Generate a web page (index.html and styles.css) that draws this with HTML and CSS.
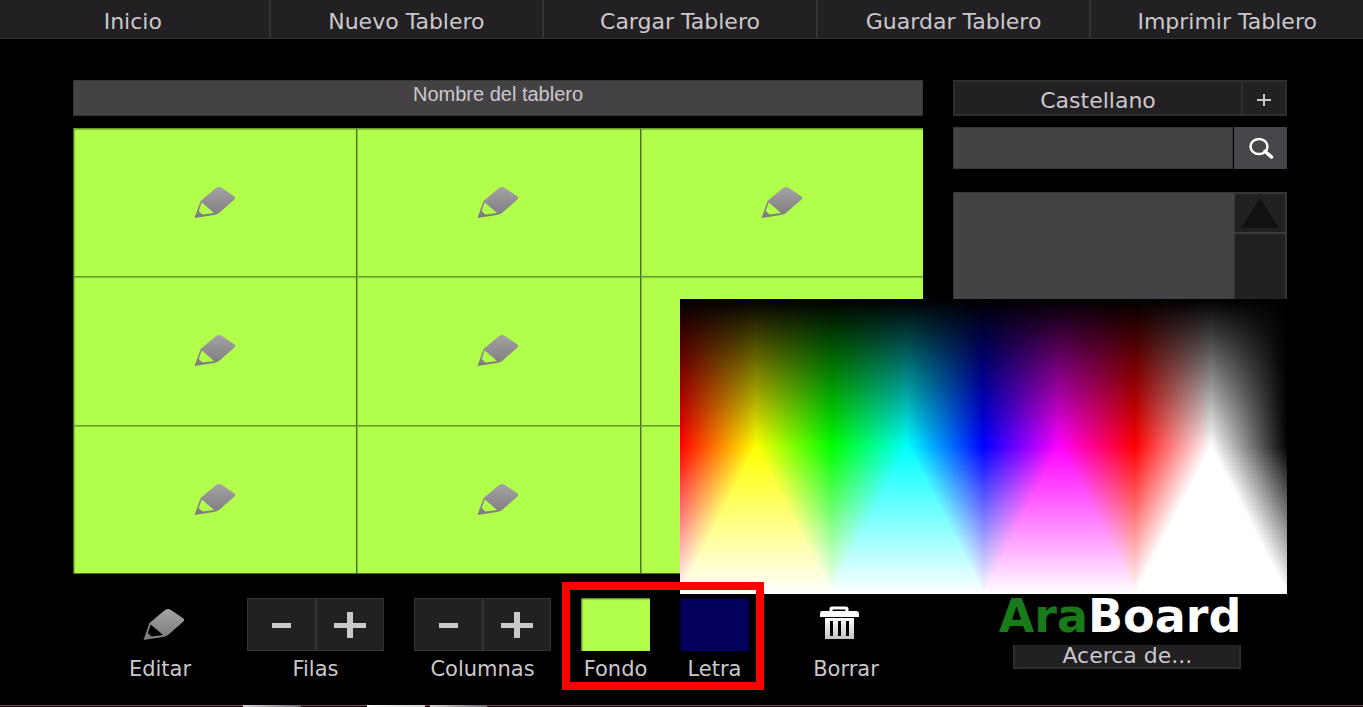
FILE: index.html
```html
<!DOCTYPE html>
<html lang="es">
<head>
    <meta charset="UTF-8">
    <meta name="viewport" content="width=device-width, initial-scale=1.0">
    <title>AraBoard</title>
    <link rel="stylesheet" href="styles.css">
</head>
<body>
    <svg class="defs" aria-hidden="true">
        <defs>
            <linearGradient id="metal" x1="0" y1="0" x2="0" y2="1">
                <stop offset="0" stop-color="#a5a2a5"/>
                <stop offset="1" stop-color="#7d7a7d"/>
            </linearGradient>
            <linearGradient id="silver" x1="0" y1="0" x2="0" y2="1">
                <stop offset="0" stop-color="#ffffff"/>
                <stop offset="1" stop-color="#c4c2c4"/>
            </linearGradient>
            <symbol id="pencil" viewBox="0 0 42 33">
                <path fill="url(#metal)" fill-rule="evenodd" d="M0.5 32 L6.5 15 L22 2 Q25 0 28 2 L40.5 10.5 Q42 12 40.5 13.5 L25 27 Q23 28.5 20 29 Z M7.8 16.5 L4.8 25 L8.5 28.5 L20 27 Z"/>
            </symbol>
            <symbol id="minus" viewBox="0 0 32 26">
                <path fill="#cbc8cc" d="M7 11h19v5H7z"/>
            </symbol>
            <symbol id="plus" viewBox="0 0 32 26">
                <path fill="#cbc8cc" d="M0 11h13V0h6v11h13v5H19v10h-6V16H0z"/>
            </symbol>
        </defs>
    </svg>

    <nav class="menu">
        <a href="#">Inicio</a>
        <a href="#">Nuevo Tablero</a>
        <a href="#">Cargar Tablero</a>
        <a href="#">Guardar Tablero</a>
        <a href="#">Imprimir Tablero</a>
    </nav>

    <main class="workspace">
        <section class="editor">
            <input type="text" class="board-name" value="Nombre del tablero" aria-label="Nombre del tablero">
            <div class="board">
                <button class="cell" aria-label="Casilla 1"><svg class="pencil"><use href="#pencil"/></svg></button>
                <button class="cell" aria-label="Casilla 2"><svg class="pencil"><use href="#pencil"/></svg></button>
                <button class="cell" aria-label="Casilla 3"><svg class="pencil"><use href="#pencil"/></svg></button>
                <button class="cell" aria-label="Casilla 4"><svg class="pencil"><use href="#pencil"/></svg></button>
                <button class="cell" aria-label="Casilla 5"><svg class="pencil"><use href="#pencil"/></svg></button>
                <button class="cell" aria-label="Casilla 6"><svg class="pencil"><use href="#pencil"/></svg></button>
                <button class="cell" aria-label="Casilla 7"><svg class="pencil"><use href="#pencil"/></svg></button>
                <button class="cell" aria-label="Casilla 8"><svg class="pencil"><use href="#pencil"/></svg></button>
                <button class="cell" aria-label="Casilla 9"><svg class="pencil"><use href="#pencil"/></svg></button>
            </div>
        </section>

        <aside class="sidebar">
            <div class="language">
                <select aria-label="Idioma">
                    <option>Castellano</option>
                </select>
                <button aria-label="Más idiomas">
                    <svg width="14" height="12" viewBox="0 0 14 12"><path fill="#cbc8cc" d="M0 5h6V0h2v5h6v2H8v5H6V7H0z"/></svg>
                </button>
            </div>
            <form class="search">
                <input type="text" aria-label="Buscar pictograma">
                <button type="button" aria-label="Buscar">
                    <svg width="26" height="22" viewBox="0 0 26 22">
                        <ellipse cx="11" cy="9.5" rx="8.5" ry="7.5" fill="none" stroke="#fff" stroke-width="2.4"/>
                        <path d="M17 14.5 L23.5 20" stroke="#fff" stroke-width="3.6" stroke-linecap="round"/>
                    </svg>
                </button>
            </form>
            <div class="results">
                <div class="results-list"></div>
                <div class="scroll">
                    <button class="scroll-up" aria-label="Subir">
                        <svg width="38" height="30" viewBox="0 0 38 30"><path fill="#111012" d="M19 0 38 30H0z"/></svg>
                    </button>
                </div>
            </div>
        </aside>

        <div class="toolbar">
            <div class="tool">
                <button class="icon-btn" id="edit" aria-labelledby="edit-label">
                    <svg width="50" height="33" viewBox="0 0 50 33"><use href="#pencil" x="8" width="42" height="33"/></svg>
                </button>
                <label id="edit-label" for="edit">Editar</label>
            </div>
            <div class="tool">
                <div class="stepper">
                    <button aria-label="Quitar fila"><svg><use href="#minus"/></svg></button>
                    <button aria-label="Añadir fila"><svg><use href="#plus"/></svg></button>
                </div>
                <span>Filas</span>
            </div>
            <div class="tool">
                <div class="stepper">
                    <button aria-label="Quitar columna"><svg><use href="#minus"/></svg></button>
                    <button aria-label="Añadir columna"><svg><use href="#plus"/></svg></button>
                </div>
                <span>Columnas</span>
            </div>
            <div class="colors">
                <div class="tool">
                    <input type="color" class="swatch" id="fondo" value="#b2ff4b">
                    <label for="fondo">Fondo</label>
                </div>
                <div class="tool">
                    <input type="color" class="swatch" id="letra" value="#04005b">
                    <label for="letra">Letra</label>
                </div>
            </div>
            <div class="tool">
                <button class="icon-btn" id="clear" aria-labelledby="clear-label">
                    <svg width="52" height="38" viewBox="0 0 52 38">
                        <path fill="none" stroke="#fff" stroke-width="3" d="M11 6V3q0-1 1-1h14q1 0 1 1v3"/>
                        <path fill="#fff" d="M2 5h34q3 0 3 3v3H0V8q0-3 2-3z"/>
                        <path fill="url(#silver)" fill-rule="evenodd" d="M5 12h29v21H5zM10 15v15h3V15zM18 15v15h3V15zM26 15v15h3V15z"/>
                    </svg>
                </button>
                <label id="clear-label" for="clear">Borrar</label>
            </div>
        </div>

        <div class="brand">
            <div class="brand-inner">
                <div class="logo"><span>Ara</span>Board</div>
                <button class="about">Acerca de...</button>
            </div>
        </div>

        <div class="spectrum"></div>
    </main>

    <footer class="taskbar"></footer>
</body>
</html>
```
FILE: styles.css
```css
* {
    margin: 0;
    padding: 0;
    box-sizing: border-box;
}

body {
    font-family: "DejaVu Sans", Verdana, sans-serif;
    font-size: 22px;
    min-height: 100vh;
    display: flex;
    flex-direction: column;
    background: #000;
    color: #cbc8cc;
    overflow: hidden;
}

button,
input,
select {
    font: inherit;
    color: inherit;
    border: none;
    border-radius: 0;
    outline: none;
}

button,
select {
    cursor: pointer;
}

button {
    display: flex;
    align-items: center;
    justify-content: center;
}

.defs {
    position: absolute;
    width: 0;
    height: 0;
}

/* top menu */
.menu {
    display: flex;
    height: 39px;
    margin-left: -3px;
    background: #222023;
    border-bottom: 1px solid #353336;
}

.menu a {
    flex: 1;
    display: flex;
    align-items: center;
    justify-content: center;
    padding-top: 4px;
    color: inherit;
    text-decoration: none;
    border-right: 2px solid #353336;
}

.menu a:last-child {
    border-right: none;
}

/* main area */
.workspace {
    position: relative;
    flex: 1;
    display: grid;
    grid-template-columns: minmax(0, 850fr) minmax(0, 334fr);
    grid-template-rows: 1fr auto;
    column-gap: 30px;
    margin: 41px 76px 0 73px;
}

.editor {
    display: flex;
    flex-direction: column;
    gap: 12px;
}

.board-name {
    height: 36px;
    padding-bottom: 8px;
    background: #444244;
    border: 1px solid #363436;
    font-family: "Liberation Sans", Arial, sans-serif;
    font-size: 20px;
    text-align: center;
}

.board {
    flex: 1;
    display: grid;
    grid-template-columns: repeat(3, 1fr);
    grid-template-rows: repeat(3, 1fr);
    border-bottom: 1px solid #4c6e20;
}

.cell {
    background: #b2ff4b;
    border-top: 1px solid #6b9a2d;
    border-left: 1px solid #4c6e20;
    box-shadow: inset 1px 1px 1px #85bf38;
}

.pencil {
    width: 42px;
    height: 33px;
}

/* sidebar */
.sidebar {
    display: flex;
    flex-direction: column;
}

.language {
    display: flex;
    height: 36px;
    background: #222023;
    border: 2px solid #2f2d30;
}

.language select {
    flex: 1;
    appearance: none;
    padding-top: 4px;
    background: transparent;
    text-align: center;
    text-align-last: center;
}

.language button {
    width: 44px;
    padding-top: 4px;
    background: transparent;
    border-left: 2px solid #2f2d30;
}

.search {
    display: flex;
    gap: 1px;
    height: 42px;
    margin: 11px 0 23px;
}

.search input {
    flex: 1;
    min-width: 0;
    padding: 0 8px;
    background: #444244;
    border: 1px solid #363436;
}

.search button {
    width: 53px;
    background: #474549;
}

.results {
    flex: 1;
    display: flex;
    background: #444244;
    border: 1px solid #363436;
}

.results-list {
    flex: 1;
}

.scroll {
    width: 52px;
    background: #222023;
    border: 1px solid #363436;
}

.scroll-up {
    width: 100%;
    height: 40px;
    background: #222023;
    border-bottom: 2px solid #3c3a3d;
}

/* bottom tools */
.toolbar {
    display: grid;
    grid-template-columns: 114fr 137fr 137fr 168fr 134fr;
    gap: 30px;
    padding: 24px 10px 20px 30px;
}

.tool {
    display: flex;
    flex-direction: column;
    align-items: center;
    gap: 2px;
    font-size: 21px;
    line-height: 32px;
}

.icon-btn {
    height: 53px;
    background: transparent;
}

.stepper {
    display: flex;
    width: 100%;
    height: 53px;
    background: #222023;
    border: 1px solid #353336;
}

.stepper button {
    flex: 1;
    background: transparent;
}

.stepper button + button {
    border-left: 2px solid #353336;
}

.stepper svg {
    width: 32px;
    height: 26px;
}

.colors {
    position: relative;
    display: grid;
    grid-template-columns: 1fr 1fr;
    gap: 30px;
}

/* red frame around the two colour pickers */
.colors::after {
    content: '';
    position: absolute;
    top: -16px;
    bottom: -5px;
    left: -19px;
    right: -15px;
    border: 8px solid #f00;
    pointer-events: none;
    z-index: 2;
}

.swatch {
    appearance: none;
    width: 100%;
    height: 53px;
    background: transparent;
    cursor: pointer;
}

.swatch::-webkit-color-swatch-wrapper {
    padding: 0;
}

.swatch::-webkit-color-swatch {
    border: none;
    border-radius: 0;
    box-shadow: inset 1px 1px 2px rgba(0, 0, 0, 0.6);
}

/* logo */
.brand {
    display: flex;
    justify-content: center;
    padding-top: 18px;
}

.brand-inner {
    display: flex;
    flex-direction: column;
    align-items: flex-end;
}

.logo {
    font-size: 46px;
    line-height: 48px;
    font-weight: bold;
    color: #fff;
}

.logo span {
    color: #197a19;
}

.about {
    width: 228px;
    height: 24px;
    margin-top: 5px;
    background: #222023;
    border: 2px solid #2f2d30;
    border-top: none;
    line-height: 22px;
}

/* colour palette: hues across, black at the top, white added at the bottom */
.spectrum {
    position: absolute;
    top: 219px;
    right: 0;
    width: 50%;
    height: 295px;
    isolation: isolate;
    cursor: crosshair;
    background:
        linear-gradient(to bottom, #000, transparent 50%),
        linear-gradient(to right, #f00, #ff0, #0f0, #0ff, #00f, #f0f, #f00, #fff, #000);
    z-index: 1;
}

.spectrum::after {
    content: '';
    position: absolute;
    inset: 0;
    background: linear-gradient(to bottom, #000 50%, #fff);
    mix-blend-mode: plus-lighter;
}

/* edge of the system taskbar */
.taskbar {
    height: 2px;
    background:
        linear-gradient(to right, transparent 243px, #d8d4d8 243px, #6f6a70 301px, transparent 301px, transparent 367px, #fff 367px, #d8d4d8 425px, transparent 425px, transparent 430px, #d8d4d8 430px, #6f6a70 487px, transparent 487px),
        linear-gradient(to bottom, #6b4b52 1px, #220b10 1px);
}
```
